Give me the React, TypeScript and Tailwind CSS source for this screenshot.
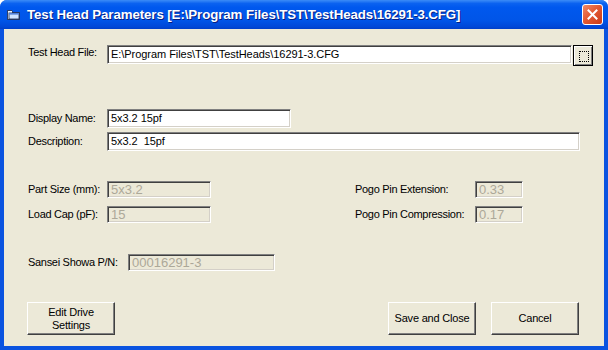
import React from "react";

const font = { fontFamily: '"Liberation Sans", Arial, sans-serif' };

function Field({
  value,
  className,
  disabled,
}: {
  value: string;
  className: string;
  disabled?: boolean;
}) {
  return (
    <div
      className={`flex items-center pl-[3px] border-t border-l border-[#808080] border-b-white border-r-white shadow-[inset_1px_1px_0_#404040,inset_-1px_-1px_0_#d4d0c8] whitespace-nowrap overflow-hidden ${
        disabled
          ? "bg-[#ece9d8] text-[#aca899] text-[13px]"
          : "bg-white text-black text-[11px] tracking-[-0.05px]"
      } ${className}`}
      style={{ borderBottomWidth: 1, borderRightWidth: 1, borderStyle: "solid" }}
    >
      {value}
    </div>
  );
}

function Label({ text, className }: { text: string; className: string }) {
  return (
    <div className={`text-[11px] tracking-[-0.3px] text-black whitespace-nowrap ${className}`}>
      {text}
    </div>
  );
}

function Button({ children, className }: { children: React.ReactNode; className: string }) {
  return (
    <div
      className={`flex flex-col items-center justify-center bg-[#ece9d8] border-t border-l border-t-white border-l-white border-b border-r border-b-[#404040] border-r-[#404040] shadow-[inset_-1px_-1px_0_#808080] text-[11px] tracking-[-0.2px] leading-[13px] text-black text-center ${className}`}
    >
      {children}
    </div>
  );
}

function WinIcon() {
  return (
    <svg width="16" height="16" viewBox="0 0 16 16">
      <path d="M1 3 L6 3 L7 5 L14 5 L14 13 L1 13 Z" fill="#2a3f6c" />
      <rect x="2" y="4" width="4" height="8" fill="#e8f2ff" />
      <rect x="3" y="6" width="10" height="6" fill="#cfe3ff" stroke="#1c2b4f" strokeWidth="0.8" />
      <rect x="3" y="6" width="10" height="1.6" fill="#4f7fd6" />
    </svg>
  );
}

export default function App() {
  return (
    <div
      className="w-[608px] h-[350px] flex flex-col bg-[#0a53e0] rounded-t-[7px] overflow-hidden"
      style={font}
    >
      {/* title bar */}
      <div className="h-[29px] flex items-center pl-[6px] pr-[5px] bg-[linear-gradient(180deg,#3c8cf7_0%,#0b62f0_12%,#0058ee_25%,#0055e8_70%,#0048d8_92%,#003fc8_100%)]">
        <WinIcon />
        <div className="ml-[5px] text-white font-bold text-[13.3px] tracking-[-0.1px] [text-shadow:1px_1px_0_#0a1e80] whitespace-nowrap">
          Test Head Parameters [E:\Program Files\TST\TestHeads\16291-3.CFG]
        </div>
        <div className="ml-auto w-[21px] h-[21px] rounded-[3px] border border-white bg-[linear-gradient(135deg,#f08a68_0%,#e35a33_45%,#c93a18_100%)] flex items-center justify-center">
          <svg width="11" height="11" viewBox="0 0 11 11">
            <path d="M1.5 1.5 L9.5 9.5 M9.5 1.5 L1.5 9.5" stroke="white" strokeWidth="2" strokeLinecap="square" />
          </svg>
        </div>
      </div>

      {/* client area */}
      <div className="flex-1 mx-[4px] mb-[4px] bg-[#ece9d8] flex flex-col pl-[24px]">
        <div className="flex items-start mt-[16px] h-[21px]">
          <Label text="Test Head File:" className="w-[79px] mt-[-1px]" />
          <Field value="E:\Program Files\TST\TestHeads\16291-3.CFG" className="w-[465px] h-[19px]" />
          <div className="ml-[1px] w-[20px] h-[21px] border border-black flex">
            <div className="flex-1 bg-[#ece9d8] border-t border-l border-white border-b-[#404040] border-r-[#404040] shadow-[inset_-1px_-1px_0_#808080] flex items-center justify-center">
              <div className="w-[10px] h-[11px] border border-dotted border-black" />
            </div>
          </div>
        </div>

        <div className="flex items-center mt-[43px]">
          <Label text="Display Name:" className="w-[79px]" />
          <Field value="5x3.2 15pf" className="w-[184px] h-[19px]" />
        </div>
        <div className="flex items-center mt-[4px]">
          <Label text="Description:" className="w-[79px]" />
          <Field value="5x3.2  15pf" className="w-[473px] h-[19px] whitespace-pre" />
        </div>

        <div className="flex items-center mt-[30px]">
          <Label text="Part Size (mm):" className="w-[79px]" />
          <Field value="5x3.2" disabled className="w-[104px] h-[17px]" />
          <Label text="Pogo Pin Extension:" className="ml-[144px] w-[120px]" />
          <Field value="0.33" disabled className="w-[48px] h-[17px]" />
        </div>
        <div className="flex items-center mt-[8px]">
          <Label text="Load Cap (pF):" className="w-[79px]" />
          <Field value="15" disabled className="w-[104px] h-[17px]" />
          <Label text="Pogo Pin Compression:" className="ml-[144px] w-[120px]" />
          <Field value="0.17" disabled className="w-[48px] h-[17px]" />
        </div>

        <div className="flex items-center mt-[31px]">
          <Label text="Sansei Showa P/N:" className="w-[100px]" />
          <Field value="00016291-3" disabled className="w-[147px] h-[17px]" />
        </div>

        <div className="flex mt-[31px] pr-[25px]">
          <Button className="w-[88px] h-[33px] ml-[-1px]">
            <span>Edit Drive</span>
            <span>Settings</span>
          </Button>
          <Button className="w-[88px] h-[33px] ml-auto">Save and Close</Button>
          <Button className="w-[88px] h-[33px] ml-[15px]">Cancel</Button>
        </div>
      </div>
    </div>
  );
}
